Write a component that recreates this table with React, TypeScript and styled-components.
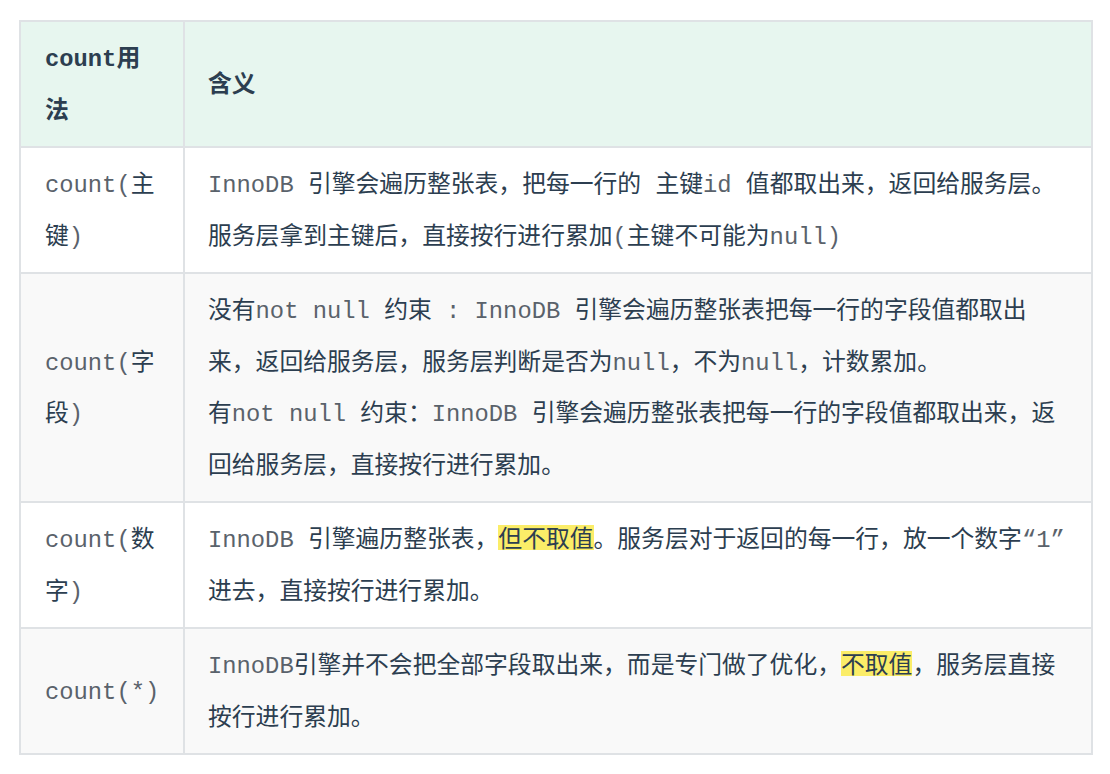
import React from "react";
import styled, { createGlobalStyle } from "styled-components";

const GlobalStyle = createGlobalStyle`
  html, body {
    margin: 0;
    padding: 0;
    background: #ffffff;
  }
  body {
    font-family: "Noto Sans CJK SC", "Noto Sans", sans-serif;
    color: #2c3e50;
  }
`;

const Page = styled.div`
  padding: 20px 0 0 19px;
`;

const Table = styled.div`
  box-sizing: border-box;
  width: 1074px;
  border-top: 2px solid #dfe2e5;
  border-left: 2px solid #dfe2e5;
  font-size: 23.8px;
  line-height: 51.5px;
`;

type Tone = "head" | "white" | "gray";

const toneBg: Record<Tone, string> = {
  head: "#e7f6ef",
  white: "#ffffff",
  gray: "#f9f9f9",
};

const Row = styled.div<{ $tone: Tone }>`
  display: grid;
  grid-template-columns: 164px 1fr;
  background: ${(p) => toneBg[p.$tone]};
`;

const Cell = styled.div<{ $first?: boolean; $head?: boolean }>`
  box-sizing: border-box;
  display: flex;
  align-items: center;
  border-right: 2px solid #dfe2e5;
  border-bottom: 2px solid #dfe2e5;
  padding: ${(p) => (p.$first ? "8px 22px 13px 24px" : "8px 20px 13px 23px")};
  font-weight: ${(p) => (p.$head ? 700 : 400)};
  color: #2c3e50;
`;

const CellText = styled.div`
  min-width: 0;
  word-break: normal;
`;

const Code = styled.span<{ $bold?: boolean }>`
  font-family: "Liberation Mono", "Noto Sans CJK SC", monospace;
  font-size: 23.8px;
  line-height: 1;
  color: ${(p) => (p.$bold ? "#2c3e50" : "#5a626b")};
  font-weight: ${(p) => (p.$bold ? 700 : 400)};
  white-space: pre-wrap;
`;

const Mark = styled.span`
  background-image: linear-gradient(#fbed68, #fbed68);
  background-repeat: no-repeat;
  background-position: 0 0.25em;
  background-size: 100% 1.07em;
`;

export default function App() {
  return (
    <>
      <GlobalStyle />
      <Page>
        <Table>
          <Row $tone="head">
            <Cell $first $head>
              <CellText>
                <Code $bold>count</Code>用法
              </CellText>
            </Cell>
            <Cell $head>
              <CellText>含义</CellText>
            </Cell>
          </Row>

          <Row $tone="white">
            <Cell $first>
              <CellText>
                <Code>count(</Code>主键<Code>)</Code>
              </CellText>
            </Cell>
            <Cell>
              <CellText>
                <Code>InnoDB </Code>引擎会遍历整张表，把每一行的<Code> </Code>主键
                <Code>id </Code>值都取出来，返回给服务层。服务层拿到主键后，直接按行进行累加
                <Code>(</Code>主键不可能为<Code>null)</Code>
              </CellText>
            </Cell>
          </Row>

          <Row $tone="gray">
            <Cell $first>
              <CellText>
                <Code>count(</Code>字段<Code>)</Code>
              </CellText>
            </Cell>
            <Cell>
              <CellText>
                没有<Code>not null </Code>约束<Code> : InnoDB </Code>
                引擎会遍历整张表把每一行的字段值都取出来，返回给服务层，服务层判断是否为
                <Code>null</Code>，不为<Code>null</Code>，计数累加。
                <br />
                有<Code>not null </Code>约束：<Code>InnoDB </Code>
                引擎会遍历整张表把每一行的字段值都取出来，返回给服务层，直接按行进行累加。
              </CellText>
            </Cell>
          </Row>

          <Row $tone="white">
            <Cell $first>
              <CellText>
                <Code>count(</Code>数字<Code>)</Code>
              </CellText>
            </Cell>
            <Cell>
              <CellText>
                <Code>InnoDB </Code>引擎遍历整张表，<Mark>但不取值</Mark>
                。服务层对于返回的每一行，放一个数字<Code>“1”</Code>
                <wbr />
                进去，直接按行进行累加。
              </CellText>
            </Cell>
          </Row>

          <Row $tone="gray">
            <Cell $first>
              <CellText>
                <Code>count(*)</Code>
              </CellText>
            </Cell>
            <Cell>
              <CellText>
                <Code>InnoDB</Code>引擎并不会把全部字段取出来，而是专门做了优化，
                <Mark>不取值</Mark>，服务层直接按行进行累加。
              </CellText>
            </Cell>
          </Row>
        </Table>
      </Page>
    </>
  );
}
